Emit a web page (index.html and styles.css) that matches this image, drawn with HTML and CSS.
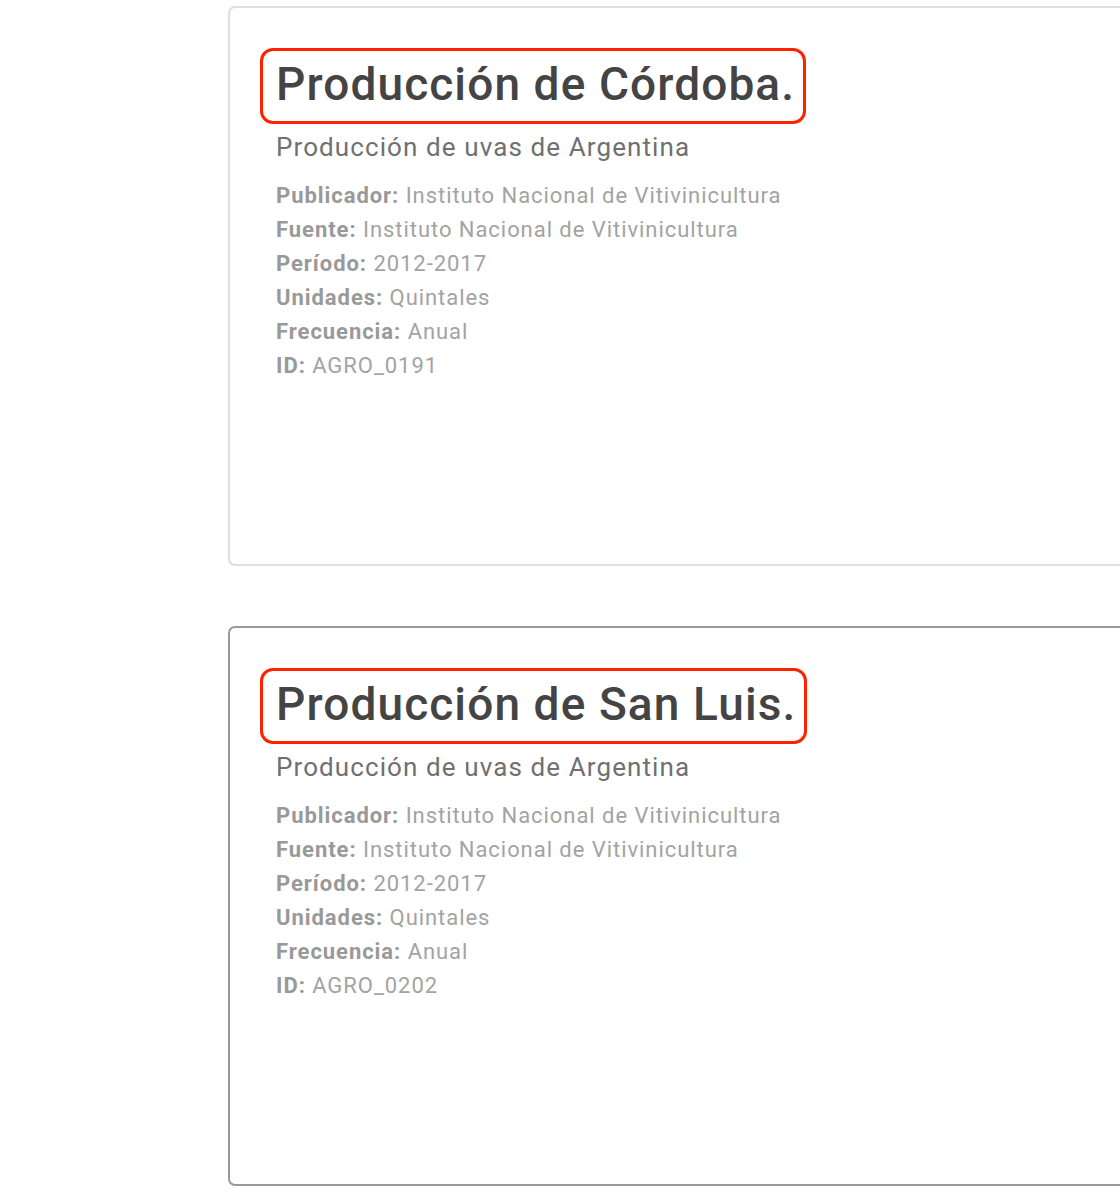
FILE: index.html
```html
<!DOCTYPE html>
<html lang="es">
<head>
<meta charset="utf-8">
<link rel="stylesheet" href="styles.css">
</head>
<body>
<div class="list">
  <div class="card">
    <h2 class="title">Producción de Córdoba.</h2>
    <p class="subtitle">Producción de uvas de Argentina</p>
    <ul class="meta">
      <li><b>Publicador:</b> Instituto Nacional de Vitivinicultura</li>
      <li><b>Fuente:</b> Instituto Nacional de Vitivinicultura</li>
      <li><b>Período:</b> 2012-2017</li>
      <li><b>Unidades:</b> Quintales</li>
      <li><b>Frecuencia:</b> Anual</li>
      <li><b>ID:</b> AGRO_0191</li>
    </ul>
  </div>
  <div class="card card-active">
    <h2 class="title">Producción de San Luis.</h2>
    <p class="subtitle">Producción de uvas de Argentina</p>
    <ul class="meta">
      <li><b>Publicador:</b> Instituto Nacional de Vitivinicultura</li>
      <li><b>Fuente:</b> Instituto Nacional de Vitivinicultura</li>
      <li><b>Período:</b> 2012-2017</li>
      <li><b>Unidades:</b> Quintales</li>
      <li><b>Frecuencia:</b> Anual</li>
      <li><b>ID:</b> AGRO_0202</li>
    </ul>
  </div>
</div>
</body>
</html>
```
FILE: styles.css
```css
html, body {
  margin: 0;
  padding: 0;
  background: #fff;
}
body {
  font-family: Roboto, "Liberation Sans", sans-serif;
  overflow: hidden;
}
.list {
  display: flex;
  flex-direction: column;
  gap: 60px;
  padding: 6px 0 0 228px;
}
.card {
  box-sizing: border-box;
  width: 1000px;
  height: 560px;
  border: 2px solid #dedede;
  border-radius: 7px;
  padding: 40px 30px 0 30px;
}
.card-active {
  border-color: #999;
}
.title {
  display: inline-block;
  margin: 0;
  padding: 2px 8px 6px 13px;
  border: 3px solid #ff2200;
  border-radius: 13px;
  font-size: 46px;
  font-weight: 500;
  letter-spacing: 1.1px;
  color: #444;
  line-height: 62px;
}
.subtitle {
  margin: 3px 0 0 16px;
  font-size: 26px;
  letter-spacing: 1.1px;
  color: #707070;
  line-height: 40px;
}
.meta {
  list-style: none;
  margin: 12px 0 0 16px;
  padding: 0;
  font-size: 22px;
  letter-spacing: 0.95px;
  line-height: 34px;
  color: #a3a3a3;
}
.meta b {
  font-weight: 700;
  color: #999;
}
```
